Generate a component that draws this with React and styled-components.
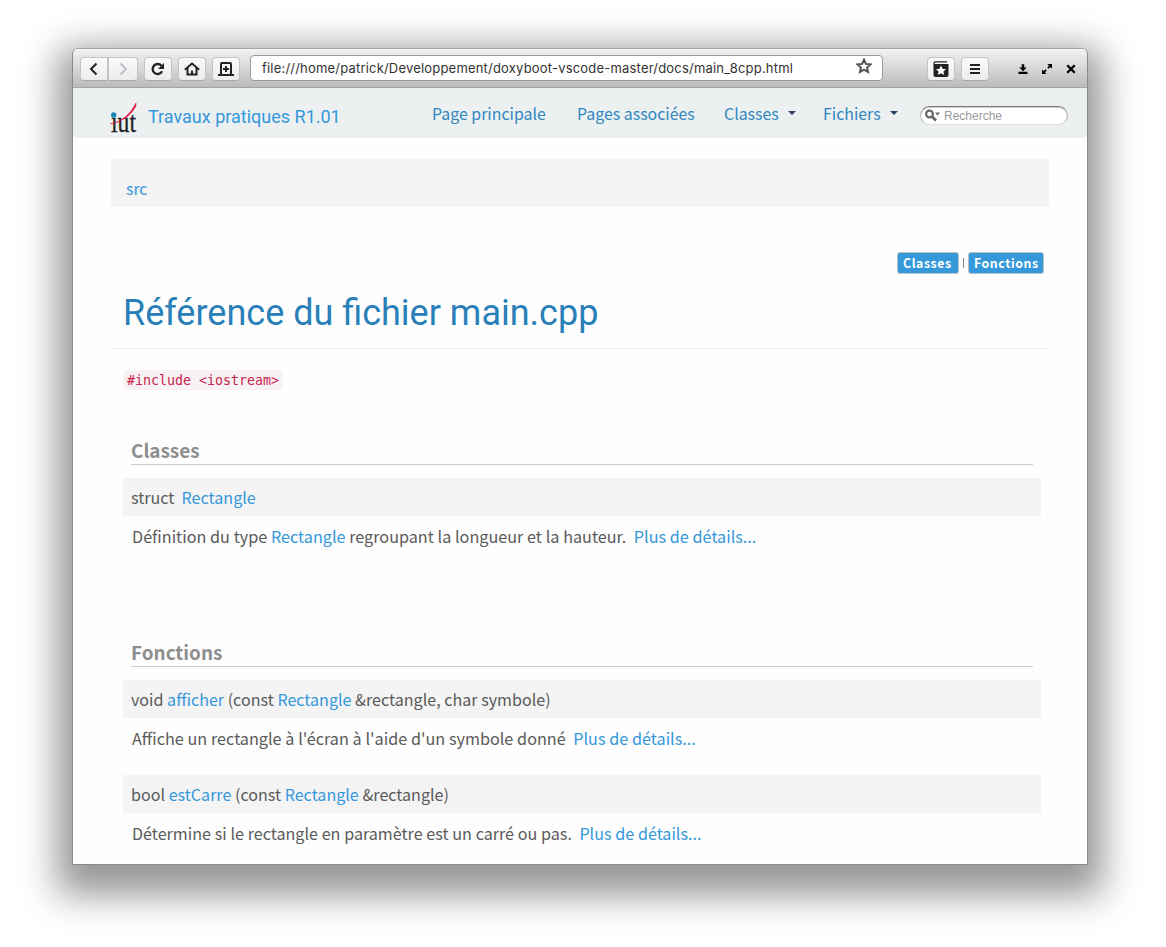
import React from "react";
import styled, { createGlobalStyle } from "styled-components";

const Global = createGlobalStyle`
  * { box-sizing: border-box; }
  body { margin: 0; background: #fff; }
`;
const textFont = `"Noto Sans CJK SC", "Noto Sans", sans-serif`;

const Desktop = styled.div`
  width: 1166px; height: 947px; padding: 48px 78px 82px 72px; overflow: hidden;
`;
const Window = styled.div`
  width: 1016px; height: 817px; border: 1px solid #8b8b8b; border-top-color: #a3a3a3;
  border-radius: 6px 6px 0 0; overflow: hidden; background: #fefefe;
  display: flex; flex-direction: column;
  box-shadow: 0 15px 36px 15px rgba(0,0,0,.41);
`;
const HeaderBar = styled.header`
  flex: none; height: 39px; padding: 2px 7px 0; display: flex; align-items: center;
  background: linear-gradient(#f2f2f2, #d8d8d8 50%, #bcbaba); border-bottom: 1px solid #a5a3a3;
  box-shadow: inset 0 1px #f8f8f8;
`;
const ToolButton = styled.div`
  width: ${(p) => p.$w || 28}px; height: 24px; margin-right: ${(p) => p.$gap ?? 6}px;
  display: flex; align-items: center; justify-content: center;
  background: linear-gradient(#fafafa, #ececec); border: 1px solid #c5c4c4;
  border-bottom-color: #aaa8a8; border-radius: ${(p) => p.$radius || "4px"};
  svg { display: block; }
`;
const Address = styled.div`
  width: 633px; height: 26px; margin: -2px 44px 0 4px; padding: 0 10px 0 11px; display: flex;
  align-items: center; justify-content: space-between; background: #fff;
  border: 1px solid #999; border-radius: 4px; font: 13px/24px Inter, sans-serif; color: #333;
  letter-spacing: .195px; white-space: nowrap;
  svg { margin-top: -5px; }
`;
const WindowControls = styled.div`
  display: flex; gap: 12px; margin-left: 22px;
`;
const NavBar = styled.nav`
  flex: none; height: 50px; background: #ecf0f1; border-radius: 0 0 4px 4px;
  display: flex; padding-left: 37px; font: 15.9px/24px ${textFont}; color: #3087c0;
`;
const Logo = styled.div`
  width: 27px; height: 34px; margin: 14px 11px 0 0;
  svg { display: block; }
`;
const Brand = styled.div`
  width: 284px; padding-top: 18px; font: 18px/22px Roboto, sans-serif; color: #3498db;
`;
const NavItem = styled.div`
  width: ${(p) => p.$w}px; padding-top: 14px; display: flex; align-items: flex-start;
  white-space: nowrap;
`;
const Caret = styled.i`
  margin: 9px 0 0 ${(p) => p.$gap}px; border: 4px solid transparent;
  border-top-color: #273e63; border-bottom: 0;
`;
const Search = styled.div`
  width: 148px; height: 19px; margin-top: 18px; padding-left: 4px; display: flex; align-items: center;
  gap: 4px; border-radius: 10px; background: #fff; border: 1px solid #b5b5b5;
  border-top-color: #777; border-bottom-color: #ddd; box-shadow: inset 0 1px 1px #ccc;
  font: 12px/16px "Liberation Sans", sans-serif; color: #999;
`;
const Content = styled.main`
  flex: 1; min-height: 0; margin: 21px 20px 0; padding: 0 17px; overflow: hidden;
  border: solid #f9f9f9; border-width: 0 1px; font: 16px/24px ${textFont}; color: #5a5a5a;
`;
const Crumbs = styled.div`
  height: 48px; padding: 18px 15px 0; border-radius: 4px; background: #f4f4f4; font-size: 15.8px;
`;
const Link = styled.a`
  color: #3498db;
`;
const Summary = styled.div`
  display: flex; justify-content: flex-end; align-items: center; gap: 4px; margin-top: 45px;
  padding-right: 5px; font-size: 10px; line-height: 21px;
`;
const Label = styled.span`
  width: ${(p) => p.$w}px; height: 22px; padding-left: 5px; background: #3498db;
  border: 1px solid #b9c0c5; border-radius: 3px;
  font-size: 12.3px; line-height: 21px; font-weight: 700; color: #fff; letter-spacing: .58px;
`;
const Divider = styled.i`
  width: 1px; height: 10px; background: #888;
`;
const Title = styled.h1`
  margin: 0; height: 75px; padding: 18px 12px 0; border-bottom: 1px solid #eee;
  font: 400 36px/42px Roboto, sans-serif; color: #2980b9;
`;
const Body = styled.div`
  padding: 21px 8px 0 12px;
`;
const Code = styled.code`
  display: block; width: 160px; height: 20px; padding: 0 4px; background: #f9f2f4; border-radius: 4px;
  color: #c7254e; font: 13.3px/21px "DejaVu Sans Mono", monospace; white-space: pre;
`;
const SectionTitle = styled.h2`
  height: 29px; margin: ${(p) => p.$top}px 8px 13px; border-bottom: 1px solid #ccc;
  font: 700 18.9px/28px ${textFont}; color: #8e8e8e;
`;
const Signature = styled.div`
  height: 38px; padding: 7px 8px; background: #f4f4f4; white-space: pre; font-size: 16.1px;
`;
const Description = styled.div`
  height: 57px; padding: 8px 9px; white-space: pre; font-size: ${(p) => p.$size}px;
  word-spacing: .15px;
`;

const Glyph = ({ children, w = 16, color = "#222" }) => (
  <svg width={w} height={w} viewBox="0 0 16 16" fill="none" stroke={color} strokeWidth="2">{children}</svg>
);

export default function App() {
  return (
    <Desktop>
      <Global />
      <Window>
        <HeaderBar>
          <ToolButton $gap={0} $radius="4px 0 0 4px"><Glyph><path d="M10.500 2.500 5 8l5.500 5.500" /></Glyph></ToolButton>
          <ToolButton $w={30} $radius="0 4px 4px 0"><Glyph color="#b9bec8"><path d="M5.500 2.500 11 8l-5.500 5.500" /></Glyph></ToolButton>
          <ToolButton><Glyph><path d="M12.100 10.300a5 5 0 1 1-.6-5.500" strokeWidth="2.300" /><path d="M14 2v6H8z" fill="#222" stroke="none" /></Glyph></ToolButton>
          <ToolButton><Glyph><path d="M.8 8.700 8 2.500l7.200 6.200" /><path d="M3.500 7v6.500h9V7M8 14V9.500" /></Glyph></ToolButton>
          <ToolButton><Glyph><path d="M3 14V3q0-1 1-1h8q1 0 1 1v11M0 14h16M8 5v6M5 8h6" /></Glyph></ToolButton>
          <Address>
            <span>file:///home/patrick/Developpement/doxyboot-vscode-master/docs/main_8cpp.html</span>
            <Glyph color="#555"><path strokeWidth="2" d="m8 1.700 1.900 4.200 4.600.5-3.400 3.100.9 4.500-4-2.300L4 14l.9-4.500-3.400-3.100 4.600-.5z" /></Glyph>
          </Address>
          <ToolButton><Glyph><path d="M1 3.500V2.500Q1 .8 2.500.8H14" strokeWidth="1.200" /><path fill="#222" stroke="none" d="M.5 3h15v11q0 2-2 2h-11q-2 0-2-2z" /><path fill="#fff" stroke="none" d="m8 4.500 1.500 3.300 3.500.4-2.600 2.400.7 3.500L8 12.300l-3.100 1.800.7-3.500L3 8.200l3.500-.4z" /></Glyph></ToolButton>
          <ToolButton><Glyph><path d="M3 4h10M3 8h10M3 12h10" /></Glyph></ToolButton>
          <WindowControls>
            <Glyph w={12} color="#000"><path fill="#000" stroke="none" d="M6.300 1.500h3.400V6H13l-5 5-5-5h3.300zM2 11.500h12v3H2z" /></Glyph>
            <Glyph w={12} color="#000"><path strokeWidth="2.600" d="m3.500 12.500 3.300-3.300m2.400-2.400 3.300-3.300" /><path fill="#000" stroke="none" d="M8.500 1.300h6.200v6.200zM1.300 8.500v6.200h6.200z" /></Glyph>
            <Glyph w={12} color="#000"><path strokeWidth="3.200" d="m3 3 10 10M13 3 3 13" /></Glyph>
          </WindowControls>
        </HeaderBar>
        <NavBar>
          <Logo>
            <svg width="28" height="34" viewBox="0 0 28 34" overflow="visible">
              <text x="1" y="30" fontFamily="Liberation Serif" fontSize="30" textLength="25" lengthAdjust="spacingAndGlyphs" fill="#222" stroke="#222" strokeWidth=".3">ıut</text>
              <circle cx="3.700" cy="13" r="2.700" fill="#1686b0" />
              <path d="M0 22Q17 19 26 1v3Q18 19 0 22" fill="#e4113d" stroke="#e4113d" strokeWidth=".5" />
            </svg>
          </Logo>
          <Brand>Travaux pratiques R1.01</Brand>
          <NavItem $w={145}>Page principale</NavItem>
          <NavItem $w={147}>Pages associées</NavItem>
          <NavItem $w={99}>Classes<Caret $gap={9} /></NavItem>
          <NavItem $w={97}>Fichiers<Caret $gap={9.5} /></NavItem>
          <Search>
            <svg width="15" height="13" viewBox="0 0 15 13"><circle cx="4.500" cy="5" r="3.400" fill="none" stroke="#666" strokeWidth="2.200" /><path d="m7 7.500 4 4" stroke="#666" strokeWidth="2.800" /><path d="M10 3.500h5l-2.500 3z" fill="#666" /></svg>
            <span>Recherche</span>
          </Search>
        </NavBar>
        <Content>
          <Crumbs><Link>src</Link></Crumbs>
          <Summary><Label $w={62}>Classes</Label><Divider /><Label $w={76}>Fonctions</Label></Summary>
          <Title>Référence du fichier main.cpp</Title>
          <Body>
            <Code>{"#include <iostream>"}</Code>
            <SectionTitle $top={46}>Classes</SectionTitle>
            <Signature>{"struct  "}<Link>Rectangle</Link></Signature>
            <Description $size={16.18}>Définition du type <Link>Rectangle</Link>{" regroupant la longueur et la hauteur.  "}<Link>Plus de détails...</Link></Description>
            <SectionTitle $top={65}>Fonctions</SectionTitle>
            <Signature>void <Link>afficher</Link> (const <Link>Rectangle</Link>{" &rectangle, char symbole)"}</Signature>
            <Description $size={16.2}>{"Affiche un rectangle à l'écran à l'aide d'un symbole donné  "}<Link>Plus de détails...</Link></Description>
            <Signature>bool <Link>estCarre</Link> (const <Link>Rectangle</Link>{" &rectangle)"}</Signature>
            <Description $size={16.11}>{"Détermine si le rectangle en paramètre est un carré ou pas.  "}<Link>Plus de détails...</Link></Description>
          </Body>
        </Content>
      </Window>
    </Desktop>
  );
}
